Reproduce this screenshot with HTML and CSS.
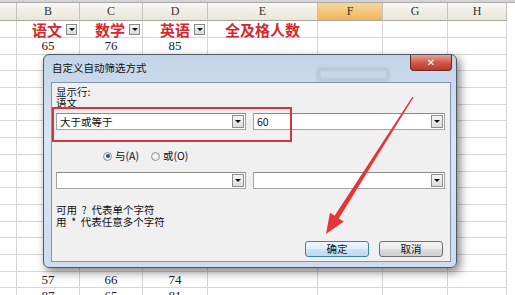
FILE: index.html
```html
<!DOCTYPE html>
<html lang="zh-CN">
<head>
  <meta charset="UTF-8" />
  <title>自定义自动筛选方式</title>
  <link rel="stylesheet" href="styles.css">
</head>
<body>

  <!-- SPREADSHEET -->
  <div class="sheet">
    <div class="strip"></div>
    <div class="row head">
      <div class="c"></div><div class="c">B</div><div class="c">C</div><div class="c">D</div>
      <div class="c">E</div><div class="c sel">F</div><div class="c">G</div><div class="c">H</div>
    </div>
    <div class="row r1">
      <div class="c"></div>
      <div class="c f">语文<span class="fbtn"></span></div>
      <div class="c f">数学<span class="fbtn"></span></div>
      <div class="c f">英语<span class="fbtn"></span></div>
      <div class="c t">全及格人数</div>
      <div class="c"></div><div class="c"></div><div class="c"></div>
    </div>
    <div class="row"><div class="c"></div><div class="c">65</div><div class="c">76</div><div class="c">85</div><div class="c"></div><div class="c"></div><div class="c"></div><div class="c"></div></div>
    <div class="row"><div class="c"></div><div class="c"></div><div class="c"></div><div class="c"></div><div class="c"></div><div class="c"></div><div class="c"></div><div class="c"></div></div>
    <div class="row"><div class="c"></div><div class="c"></div><div class="c"></div><div class="c"></div><div class="c"></div><div class="c"></div><div class="c"></div><div class="c"></div></div>
    <div class="row"><div class="c"></div><div class="c"></div><div class="c"></div><div class="c"></div><div class="c"></div><div class="c"></div><div class="c"></div><div class="c"></div></div>
    <div class="row"><div class="c"></div><div class="c"></div><div class="c"></div><div class="c"></div><div class="c"></div><div class="c"></div><div class="c"></div><div class="c"></div></div>
    <div class="row"><div class="c"></div><div class="c"></div><div class="c"></div><div class="c"></div><div class="c"></div><div class="c"></div><div class="c"></div><div class="c"></div></div>
    <div class="row"><div class="c"></div><div class="c"></div><div class="c"></div><div class="c"></div><div class="c"></div><div class="c"></div><div class="c"></div><div class="c"></div></div>
    <div class="row"><div class="c"></div><div class="c"></div><div class="c"></div><div class="c"></div><div class="c"></div><div class="c"></div><div class="c"></div><div class="c"></div></div>
    <div class="row"><div class="c"></div><div class="c"></div><div class="c"></div><div class="c"></div><div class="c"></div><div class="c"></div><div class="c"></div><div class="c"></div></div>
    <div class="row"><div class="c"></div><div class="c"></div><div class="c"></div><div class="c"></div><div class="c"></div><div class="c"></div><div class="c"></div><div class="c"></div></div>
    <div class="row"><div class="c"></div><div class="c"></div><div class="c"></div><div class="c"></div><div class="c"></div><div class="c"></div><div class="c"></div><div class="c"></div></div>
    <div class="row"><div class="c"></div><div class="c"></div><div class="c"></div><div class="c"></div><div class="c"></div><div class="c"></div><div class="c"></div><div class="c"></div></div>
    <div class="row"><div class="c"></div><div class="c"></div><div class="c"></div><div class="c"></div><div class="c"></div><div class="c"></div><div class="c"></div><div class="c"></div></div>
    <div class="row"><div class="c"></div><div class="c"></div><div class="c"></div><div class="c"></div><div class="c"></div><div class="c"></div><div class="c"></div><div class="c"></div></div>
    <div class="row"><div class="c"></div><div class="c">57</div><div class="c">66</div><div class="c">74</div><div class="c"></div><div class="c"></div><div class="c"></div><div class="c"></div></div>
    <div class="row"><div class="c"></div><div class="c">87</div><div class="c">65</div><div class="c">81</div><div class="c"></div><div class="c"></div><div class="c"></div><div class="c"></div></div>
  </div>

  <!-- DIALOG -->
  <div class="dialog">
    <div class="titlebar">
      <span class="title">自定义自动筛选方式</span>
      <span class="ghost"></span>
      <span class="close">✕</span>
    </div>
    <div class="panel">
      <div class="label">显示行:<br>语文</div>
      <div class="combos">
        <div class="combo w1"><span class="val">大于或等于</span><span class="drop"></span></div>
        <div class="combo w2"><span class="val">60</span><span class="drop"></span></div>
      </div>
      <div class="radios">
        <span class="radio on"></span><span class="rlabel">与(A)</span>
        <span class="radio"></span><span class="rlabel">或(O)</span>
      </div>
      <div class="combos">
        <div class="combo w1"><span class="val"></span><span class="drop"></span></div>
        <div class="combo w2"><span class="val"></span><span class="drop"></span></div>
      </div>
      <div class="hint">可用&nbsp;&nbsp;?&nbsp;&nbsp;代表单个字符<br>用&nbsp;&nbsp;*&nbsp;&nbsp;代表任意多个字符</div>
      <div class="buttons">
        <button class="btn default">确定</button>
        <button class="btn">取消</button>
      </div>
    </div>
    <div class="mark"></div>
  </div>

  <!-- ANNOTATION ARROW -->
  <svg class="arrow" width="515" height="295" viewBox="0 0 515 295">
    <polygon points="413.6,97.3 338.8,218.6 343.8,221.6 326,234 330,212.6 334.6,215.8 412.4,96.7" fill="#e6353a"/>
  </svg>

</body>
</html>
```

FILE: styles.css
```css
body {
  margin: 0;
  width: 515px;
  height: 295px;
  overflow: hidden;
  background: #fff;
  position: relative;
  font-family: "Noto Sans CJK SC", sans-serif;
}

/* SPREADSHEET */
.sheet {
  width: 515px;
}

.strip {
  height: 3px;
  background: #d4d4d4;
  border-bottom: 1px solid #a9a9a9;
  box-sizing: border-box;
}

.row {
  display: grid;
  grid-template-columns: 17px 63px 63px 65px 110px 65px 65px 59px;
  height: 16.7px;
}

.c {
  box-sizing: border-box;
  border-right: 1px solid #d6d6d6;
  border-bottom: 1px solid #d6d6d6;
  font-family: "Liberation Serif", serif;
  font-size: 13px;
  color: #222;
  text-align: center;
  line-height: 16px;
  overflow: hidden;
}

.head {
  height: 18px;
}

.head .c {
  background: linear-gradient(#f8f7f1, #e8e6da);
  border-right: 1px solid #c4c2b4;
  border-bottom: 1px solid #a8a79c;
  font-size: 12px;
  line-height: 17px;
  color: #333;
}

.head .c.sel {
  background: linear-gradient(#f9d79c, #f1b55e);
}

.r1 {
  height: 17px;
}

.r1 .c.f,
.r1 .c.t {
  display: flex;
  align-items: center;
  overflow: visible;
  font-family: "Noto Sans CJK SC", sans-serif;
  font-size: 15px;
  font-weight: bold;
  color: #d8262e;
  line-height: 15px;
}

.r1 .c.f {
  justify-content: flex-end;
  gap: 4px;
  padding-right: 2px;
}

.r1 .c.t {
  justify-content: center;
}

.fbtn {
  width: 11px;
  height: 11px;
  box-sizing: border-box;
  border: 1px solid #8a8a8a;
  background: linear-gradient(#f4f4f4, #d9d9d9);
  display: flex;
  align-items: center;
  justify-content: center;
}

.fbtn::after {
  content: "";
  border-left: 3px solid transparent;
  border-right: 3px solid transparent;
  border-top: 3px solid #111;
}

/* DIALOG */
.dialog {
  position: absolute;
  left: 43px;
  top: 54px;
  width: 414px;
  height: 214px;
  box-sizing: border-box;
  border: 1px solid #4f5862;
  border-radius: 6px;
  background: linear-gradient(#c3d4e8, #d9e6f3 40%, #cddcee);
  box-shadow: 3px 4px 10px rgba(0, 0, 0, 0.5);
}

.titlebar {
  height: 27px;
  position: relative;
}

.title {
  position: absolute;
  left: 8px;
  top: 6px;
  font-size: 10.5px;
  line-height: 14px;
  color: #111;
}

.ghost {
  position: absolute;
  left: 273px;
  top: 13px;
  width: 68px;
  height: 9px;
  border: 2px solid rgba(80, 100, 130, 0.25);
  border-radius: 4px;
  filter: blur(1.5px);
}

.close {
  position: absolute;
  right: 4px;
  top: 0;
  width: 42px;
  height: 16px;
  box-sizing: border-box;
  border: 1px solid #6a2a24;
  border-top: none;
  border-radius: 0 0 4px 4px;
  background: linear-gradient(#e8a293, #d05a47 50%, #b83a2a);
  color: #fff;
  font-size: 10px;
  font-weight: bold;
  line-height: 15px;
  text-align: center;
  font-family: "DejaVu Sans", sans-serif;
}

.panel {
  margin: 0 5px 0 7px;
  height: 180px;
  box-sizing: border-box;
  border: 1px solid #8194ad;
  background: #f0f0f0;
  padding: 4px 0 0 4px;
  font-size: 10.5px;
  color: #111;
}

.label {
  line-height: 10.5px;
}

.combos {
  display: flex;
  gap: 7px;
  margin-top: 5px;
}

.combo {
  height: 17px;
  box-sizing: border-box;
  border: 1px solid #a3a3a3;
  border-top-color: #8a8a8a;
  background: #fff;
  display: flex;
  align-items: center;
  justify-content: space-between;
  padding: 0 1px 0 3px;
}

.combo.w1 {
  width: 190px;
}

.combo.w2 {
  width: 192px;
}

.val {
  font-size: 10.5px;
  line-height: 14px;
}

.drop {
  width: 12px;
  height: 13px;
  box-sizing: border-box;
  border: 1px solid #8d8d8d;
  background: linear-gradient(#f6f6f6, #dcdcdc);
  display: flex;
  align-items: center;
  justify-content: center;
}

.drop::after {
  content: "";
  border-left: 3px solid transparent;
  border-right: 3px solid transparent;
  border-top: 3px solid #111;
}

.radios {
  margin-top: 20px;
  padding-left: 47px;
  height: 12px;
  display: flex;
  align-items: center;
  line-height: 12px;
}

.radio {
  width: 9px;
  height: 9px;
  box-sizing: border-box;
  border: 1px solid #939393;
  border-radius: 50%;
  background: radial-gradient(#ffffff, #dcdcdc);
  display: flex;
  align-items: center;
  justify-content: center;
  margin-right: 3px;
}

.radio.on::after {
  content: "";
  width: 4px;
  height: 4px;
  border-radius: 50%;
  background: #2b4f80;
}

.rlabel {
  margin-right: 12px;
}

.radios + .combos {
  margin-top: 10px;
}

.hint {
  margin-top: 15px;
  line-height: 12px;
}

.buttons {
  margin-top: 13px;
  display: flex;
  justify-content: flex-end;
  gap: 10px;
  padding-right: 7px;
}

.btn {
  width: 64px;
  height: 16px;
  padding: 0;
  border: 1px solid #707070;
  border-radius: 3px;
  background: linear-gradient(#f4f4f4, #ebebeb 50%, #dddddd 51%, #cfcfcf);
  font-family: "Noto Sans CJK SC", sans-serif;
  font-size: 10.5px;
  line-height: 14px;
  color: #111;
}

.btn.default {
  border-color: #3c7fb1;
  background: linear-gradient(#eef6fb, #e0eef8 50%, #cde4f4 51%, #bcd9ef);
}

.mark {
  position: absolute;
  left: 8px;
  top: 52px;
  width: 240px;
  height: 35px;
  box-sizing: border-box;
  border: 2px solid #d2373e;
}

/* ANNOTATION */
.arrow {
  position: absolute;
  left: 0;
  top: 0;
  pointer-events: none;
}
```
